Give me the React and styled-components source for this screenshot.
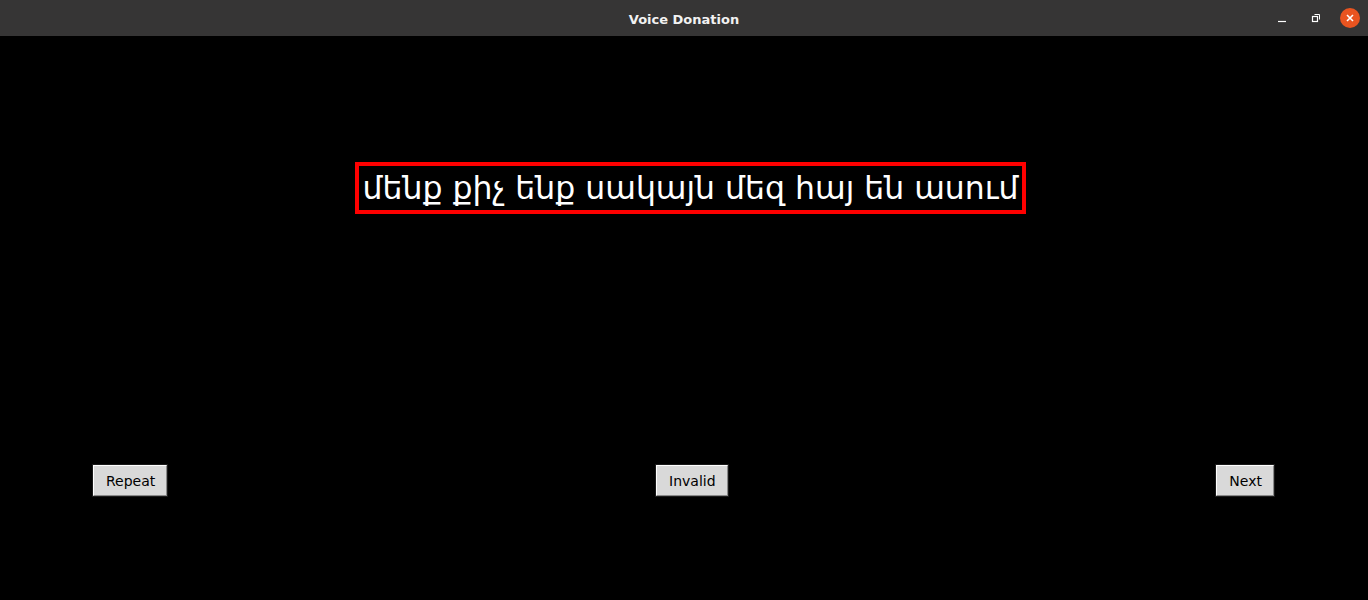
import styled, { createGlobalStyle } from 'styled-components'

const GlobalStyle = createGlobalStyle`
  html, body {
    margin: 0;
    padding: 0;
    background: #000000;
  }
  body {
    font-family: "DejaVu Sans", "Noto Sans", sans-serif;
  }
`

const Window = styled.div`
  width: 1368px;
  height: 600px;
  display: flex;
  flex-direction: column;
  background: #000000;
  overflow: hidden;
`

const TitleBar = styled.div`
  height: 36px;
  flex-shrink: 0;
  background: #363535;
  display: flex;
  align-items: center;
  justify-content: center;
  position: relative;

  .title {
    color: #f2f2f2;
    font-size: 13px;
    font-weight: 700;
    font-family: "DejaVu Sans", sans-serif;
    padding-top: 2px;
  }
`

const Controls = styled.div`
  position: absolute;
  right: 8px;
  top: 0;
  height: 36px;
  display: flex;
  align-items: center;
  gap: 14px;
`

const CtrlButton = styled.div`
  width: 20px;
  height: 20px;
  display: flex;
  align-items: center;
  justify-content: center;
  border-radius: 50%;
  background: ${props => props.$close ? '#e95420' : 'transparent'};
`

const Body = styled.div`
  flex: 1;
  display: flex;
  flex-direction: column;
  align-items: center;
  padding-top: 126px;
`

const Prompt = styled.div`
  border: 4px solid #ff0000;
  padding: 0 4px;
  margin-left: 13px;
  height: 44px;
  display: flex;
  align-items: center;
  color: #ffffff;
  font-size: 31.5px;
  font-family: "DejaVu Sans", sans-serif;
  white-space: nowrap;
`

const ButtonRow = styled.div`
  align-self: stretch;
  display: flex;
  justify-content: space-between;
  padding: 0 94px 0 93px;
  margin-top: 251px;
`

const TkButton = styled.button`
  height: 31px;
  padding: 0 11px 0 12px;
  background: #d9d9d9;
  color: #000000;
  font-size: 14px;
  font-family: "DejaVu Sans", sans-serif;
  border: 1px solid;
  border-color: #ffffff #8a8a8a #8a8a8a #ffffff;
  box-shadow: 0 0 0 1px #1a1a1a;
  border-radius: 0;
  cursor: pointer;
`

const App = () => {
  return (
    <>
      <GlobalStyle />
      <Window>
        <TitleBar>
          <span className="title">Voice Donation</span>
          <Controls>
            <CtrlButton>
              <svg width="12" height="12" viewBox="0 0 12 12">
                <path d="M2 9.5h8" stroke="#ffffff" strokeWidth="1.2" />
              </svg>
            </CtrlButton>
            <CtrlButton>
              <svg width="12" height="12" viewBox="0 0 12 12">
                <rect x="2.5" y="4.5" width="5" height="5" fill="none" stroke="#ffffff" strokeWidth="1.2" />
                <path d="M4.5 2.5h5v5" fill="none" stroke="#ffffff" strokeWidth="1" />
              </svg>
            </CtrlButton>
            <CtrlButton $close>
              <svg width="10" height="10" viewBox="0 0 10 10">
                <path d="M2 2l6 6M8 2l-6 6" stroke="#ffffff" strokeWidth="1.6" />
              </svg>
            </CtrlButton>
          </Controls>
        </TitleBar>
        <Body>
          <Prompt>մենք քիչ ենք սակայն մեզ հայ են ասում</Prompt>
          <ButtonRow>
            <TkButton>Repeat</TkButton>
            <TkButton>Invalid</TkButton>
            <TkButton>Next</TkButton>
          </ButtonRow>
        </Body>
      </Window>
    </>
  )
}

export default App
